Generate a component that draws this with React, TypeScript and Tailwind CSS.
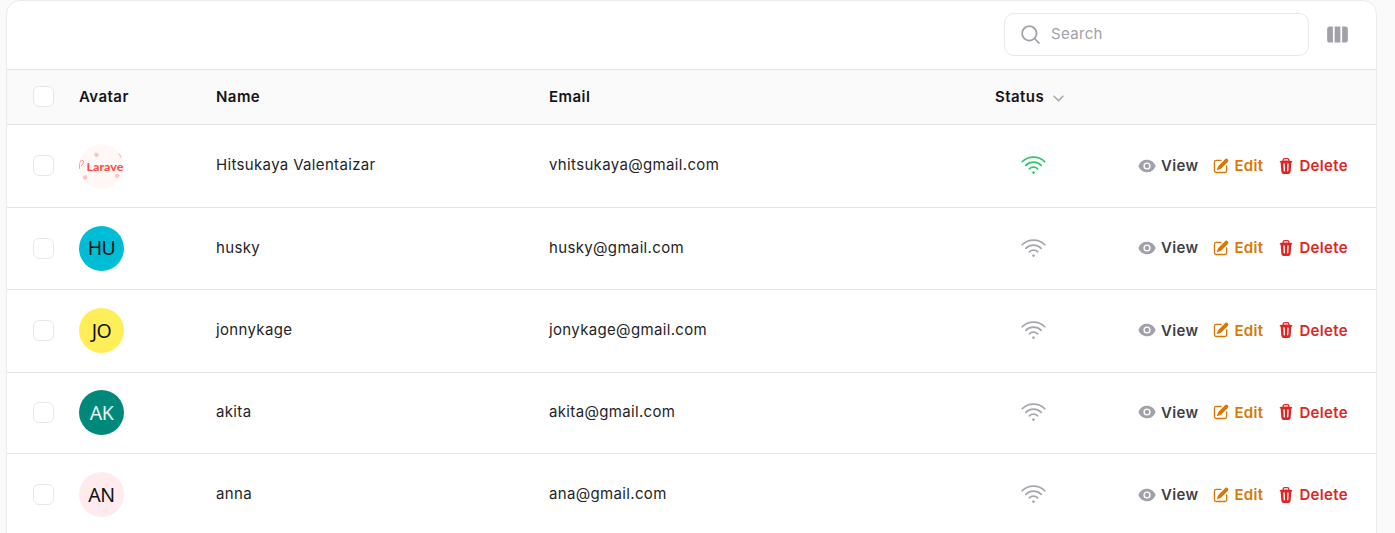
import { HiMiniEye, HiMiniPencilSquare, HiMiniTrash, HiMiniViewColumns, HiMiniMagnifyingGlass, HiMiniChevronDown, HiOutlineWifi } from "react-icons/hi2";

type User = { name: string; email: string; initials?: string; avatar: string; online: boolean; height: string };

const users: User[] = [
  { name: "Hitsukaya Valentaizar", email: "vhitsukaya@gmail.com", avatar: "", online: true, height: "h-[83px]" },
  { name: "husky", email: "husky@gmail.com", initials: "HU", avatar: "bg-[#00bcd4] text-[#111]", online: false, height: "h-[82px]" },
  { name: "jonnykage", email: "jonykage@gmail.com", initials: "JO", avatar: "bg-[#ffee58] text-[#111]", online: false, height: "h-[82.5px]" },
  { name: "akita", email: "akita@gmail.com", initials: "AK", avatar: "bg-[#00897b] text-[#e4f5f3]", online: false, height: "h-[81.5px]" },
  { name: "anna", email: "ana@gmail.com", initials: "AN", avatar: "bg-[#ffebee] text-[#111]", online: false, height: "h-[83px]" },
];

const columns = "grid grid-cols-[72px_137px_333px_446px_1fr] items-center";

function Checkbox() {
  return <span className="mb-px ml-[26px] block h-[21px] w-[21px] rounded-[6px] border border-[#e7e7e8] bg-white" />;
}

function LogoAvatar() {
  return (
    <svg className="h-[45px] w-[45px] tracking-normal" viewBox="0 0 45 45">
      <defs>
        <clipPath id="avatar-circle"><circle cx="22.5" cy="22.5" r="22.5" /></clipPath>
      </defs>
      <g clipPath="url(#avatar-circle)">
        <circle cx="22.5" cy="22.5" r="22.5" fill="#fff8f7" />
        <g fill="#ffc4c1">
          <path d="M15.500 8.500l3.500 .5 1 2.500-2.500 2-2-1.500z" />
          <path d="M39 9l2 1 2 3-1.500 1z" />
          <path d="M4 32l3.500-1 1 3.500-2.500 1.500-2-1.500z" />
          <path d="M36.500 30.500l3-1 1 2.500-2.500 2.500-2-1.500z" />
        </g>
        <path d="M0.500 25v-6l2-3 2 1-.5 3-2 2" fill="none" stroke="#ff9995" strokeWidth="1" />
        <text x="7.5" y="26.500" textLength="37" lengthAdjust="spacingAndGlyphs" fontFamily="Lato, sans-serif" fontWeight="700" fontSize="12" fill="#ff4a43">Larave</text>
      </g>
    </svg>
  );
}

function Row({ user }: { user: User }) {
  return (
    <div className={`${columns} ${user.height} border-b border-[#e4e4e5]`}>
      <Checkbox />
      {user.initials ? (
        <div className={`mb-px flex h-[45px] w-[45px] items-center justify-center rounded-full font-['Noto_Sans',sans-serif] text-[19.5px] leading-none tracking-[-0.5px] ${user.avatar}`}>{user.initials}</div>
      ) : (
        <LogoAvatar />
      )}
      <span className="mb-px">{user.name}</span>
      <span className="mb-px">{user.email}</span>
      <div className="flex items-center justify-between pr-7 font-semibold">
        <HiOutlineWifi className={`mb-px ml-[25px] h-[27px] w-[27px] ${user.online ? "text-[#32c76a]" : "text-[#a6a6ad]"}`} />
        <div className="flex items-center gap-[14px]">
          <span className="flex items-center gap-[5px] text-[#3f3f46]"><HiMiniEye className="mb-px h-[18px] w-[18px] text-[#a1a1aa]" />View</span>
          <span className="flex items-center gap-[4px] text-[#d97706]"><HiMiniPencilSquare className="mb-px h-[18px] w-[18px]" />Edit</span>
          <span className="flex items-center gap-[4px] text-[#dc2626]"><HiMiniTrash className="mb-px h-[18px] w-[18px]" />Delete</span>
        </div>
      </div>
    </div>
  );
}

export default function App() {
  return (
    <div className="h-[533px] overflow-hidden bg-[#fafafa] pl-[6px] pr-[18px] font-['Inter',sans-serif] text-[15px] tracking-[0.34px] text-[#242427]">
      <div className="h-[560px] overflow-hidden rounded-[14px] border border-[#ebebec] bg-white">
        <div className="flex h-[69px] items-center justify-end border-b border-[#e4e4e5] pb-0.5 pr-[27px]">
          <div className="mr-[17px] flex h-[43px] w-[305px] items-center rounded-[10px] border border-[#e7e7e8] bg-white pl-[14px] text-[#a1a1aa]">
            <HiMiniMagnifyingGlass className="mr-[9px] h-[23px] w-[23px]" />
            <span>Search</span>
          </div>
          <HiMiniViewColumns className="h-[23px] w-[23px] text-[#a1a1aa]" />
        </div>
        <div className={`${columns} h-[55px] border-b border-[#e4e4e5] bg-[#fafafa] font-semibold tracking-[0.45px] text-[#151518]`}>
          <Checkbox />
          <span>Avatar</span>
          <span>Name</span>
          <span>Email</span>
          <span className="flex items-center gap-[4px]">Status<HiMiniChevronDown className="h-[21px] w-[21px] text-[#a9a9b0]" /></span>
        </div>
        {users.map((user) => <Row key={user.name} user={user} />)}
      </div>
    </div>
  );
}
